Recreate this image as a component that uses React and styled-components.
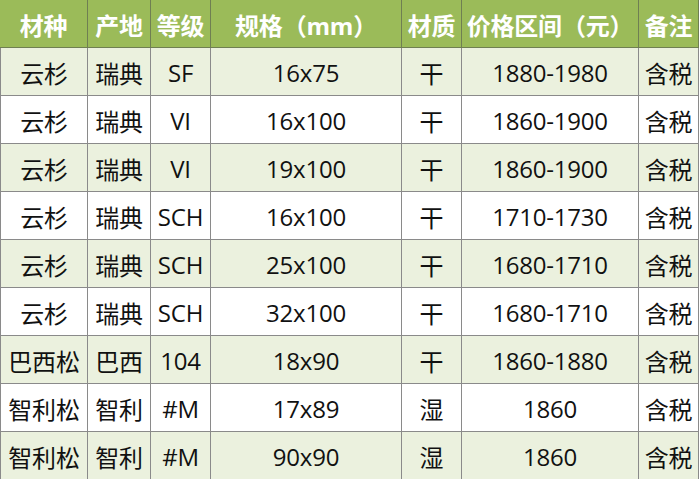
import React from "react";
import styled, { createGlobalStyle } from "styled-components";

const Global = createGlobalStyle`
  html, body { margin: 0; padding: 0; background: #ffffff; }
  body { font-family: "Open Sans", "Noto Sans CJK SC", sans-serif; }
`;

const Grid = styled.div`
  display: grid;
  grid-template-columns: 88px 63px 60px 191px 60px 177px 60px;
  grid-auto-rows: 48px;
  width: 699px;
`;

const Cell = styled.div`
  box-sizing: border-box;
  display: flex;
  align-items: center;
  justify-content: center;
  white-space: nowrap;
  font-size: 24px;
  letter-spacing: -0.2px;
  color: #111;
  background: ${(p) => (p.$alt ? "#EBF1DE" : "#ffffff")};
  border-right: 1px solid #8a8a8a;
  border-bottom: 1px solid #8a8a8a;
  border-left: ${(p) => (p.$first ? "1px solid #8a8a8a" : "none")};
  padding-top: 1px;
`;

const HeadCell = styled(Cell)`
  background: #9BBB59;
  color: #ffffff;
  font-weight: 700;
  border-left: none;
  border-right: 1px solid #6f7f52;
  border-bottom: 1px solid #6f7f52;
`;

const headers = ["材种", "产地", "等级", "规格（mm）", "材质", "价格区间（元）", "备注"];

const rows = [
  ["云杉", "瑞典", "SF", "16x75", "干", "1880-1980", "含税"],
  ["云杉", "瑞典", "VI", "16x100", "干", "1860-1900", "含税"],
  ["云杉", "瑞典", "VI", "19x100", "干", "1860-1900", "含税"],
  ["云杉", "瑞典", "SCH", "16x100", "干", "1710-1730", "含税"],
  ["云杉", "瑞典", "SCH", "25x100", "干", "1680-1710", "含税"],
  ["云杉", "瑞典", "SCH", "32x100", "干", "1680-1710", "含税"],
  ["巴西松", "巴西", "104", "18x90", "干", "1860-1880", "含税"],
  ["智利松", "智利", "#M", "17x89", "湿", "1860", "含税"],
  ["智利松", "智利", "#M", "90x90", "湿", "1860", "含税"],
];

export default function App() {
  return (
    <>
      <Global />
      <Grid>
        {headers.map((h) => (
          <HeadCell key={h}>{h}</HeadCell>
        ))}
        {rows.map((r, i) =>
          r.map((c, j) => (
            <Cell key={`${i}-${j}`} $alt={i % 2 === 0} $first={j === 0}>
              {c}
            </Cell>
          ))
        )}
      </Grid>
    </>
  );
}
